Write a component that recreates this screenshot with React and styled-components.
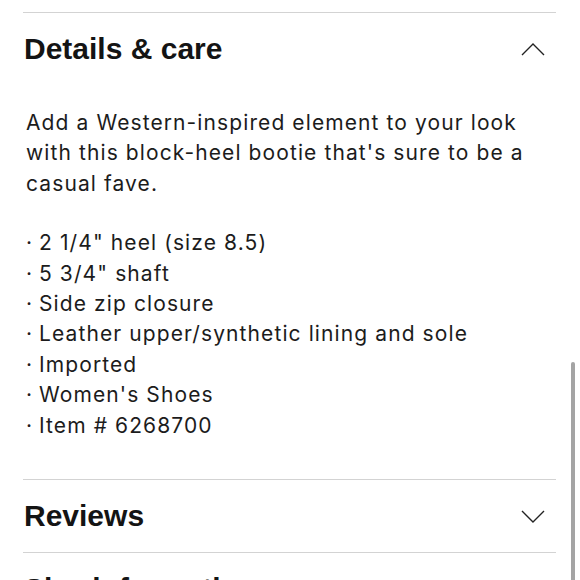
import React from "react";
import styled, { createGlobalStyle } from "styled-components";

const Global = createGlobalStyle`
  html, body { margin: 0; padding: 0; background: #fff; }
  body { overflow: hidden; }
  * { box-sizing: border-box; }
`;

const Page = styled.div`
  width: 580px;
  height: 580px;
  overflow: hidden;
  padding: 12px 24px 0 23px;
  background: #fff;
  position: relative;
`;

const Section = styled.section`
  border-top: 1.5px solid #d3d3d3;
`;

const Header = styled.div`
  height: 72px;
  display: flex;
  align-items: center;
  justify-content: space-between;
  padding: 0 11px 0 1px;
`;

const Title = styled.h2`
  margin: 0;
  font-family: "Liberation Sans", Arial, sans-serif;
  font-weight: 700;
  font-size: 30px;
  letter-spacing: 0;
  color: #141414;
`;

const Body = styled.div`
  padding: 23px 0 38px 3px;
  font-family: Inter, "Noto Sans", sans-serif;
  font-size: 21px;
  line-height: 30.4px;
  letter-spacing: 1.1px;
  color: #1c1c1c;
`;

const Para = styled.p`
  margin: 0 0 29px;
`;

const List = styled.ul`
  margin: 0;
  padding: 0;
  list-style: none;
`;

const Item = styled.li`
  display: flex;
  &::before {
    content: "·";
    width: 13px;
    flex: none;
  }
`;

const Scrollbar = styled.div`
  position: absolute;
  left: 571px;
  top: 362px;
  width: 4px;
  height: 240px;
  border-radius: 2px;
  background: #a4a4a4;
`;

const Chevron = ({ up }) => (
  <svg width="24" height="13" viewBox="0 0 24 13" fill="none">
    <polyline
      points={up ? "1,12 12,1 23,12" : "1,1 12,12 23,1"}
      stroke="#222"
      strokeWidth="1.4"
    />
  </svg>
);

const items = [
  '2 1/4" heel (size 8.5)',
  '5 3/4" shaft',
  "Side zip closure",
  "Leather upper/synthetic lining and sole",
  "Imported",
  "Women's Shoes",
  "Item # 6268700",
];

export default function App() {
  return (
    <>
      <Global />
      <Page>
        <Section>
          <Header>
            <Title>Details &amp; care</Title>
            <Chevron up />
          </Header>
          <Body>
            <Para>
              Add a Western-inspired element to your look with this block-heel
              bootie that's sure to be a casual fave.
            </Para>
            <List>
              {items.map((t) => (
                <Item key={t}>{t}</Item>
              ))}
            </List>
          </Body>
        </Section>
        <Section>
          <Header>
            <Title>Reviews</Title>
            <Chevron />
          </Header>
        </Section>
        <Section>
          <Header>
            <Title>Size information</Title>
            <Chevron />
          </Header>
        </Section>
        <Scrollbar />
      </Page>
    </>
  );
}
